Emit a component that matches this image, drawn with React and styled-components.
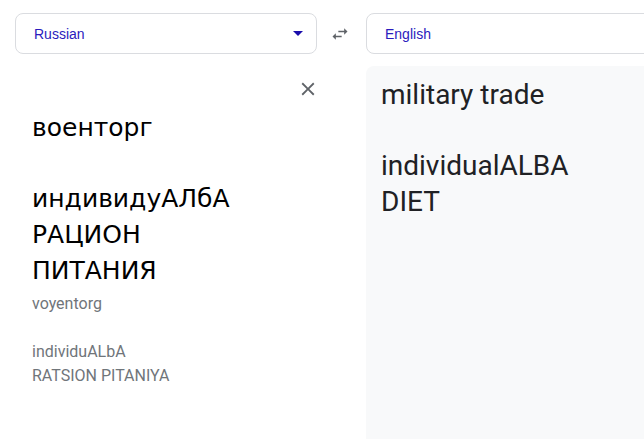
import React from "react";
import styled, { createGlobalStyle } from "styled-components";

const GlobalStyle = createGlobalStyle`
  html, body {
    margin: 0;
    padding: 0;
    background: #fff;
    overflow: hidden;
  }
  body {
    font-family: Roboto, "Liberation Sans", Arial, sans-serif;
  }
`;

const Page = styled.div`
  display: grid;
  grid-template-columns: 302px 49px 302px;
  grid-template-rows: 41px 1fr;
  row-gap: 12px;
  padding: 13px 0 0 15px;
  height: 439px;
  box-sizing: border-box;
  width: 700px;
`;

const Select = styled.div`
  display: flex;
  align-items: center;
  justify-content: space-between;
  border: 1px solid #dadce0;
  border-radius: 8px;
  padding: 0 13px 0 18px;
  box-sizing: border-box;
  font-family: Arial, "Liberation Sans", sans-serif;
  font-size: 14px;
  color: #2b1bbd;
`;

const SwapButton = styled.div`
  display: flex;
  align-items: center;
  justify-content: center;
  color: #5f6368;
  padding-right: 3px;
`;

const SourcePanel = styled.div`
  position: relative;
  padding: 44px 0 0 17px;
`;

const CloseButton = styled.div`
  position: absolute;
  top: 12px;
  right: -2px;
  color: #5f6368;
  display: flex;
`;

const SourceText = styled.div`
  font-family: "Century Gothic", "DejaVu Sans", sans-serif;
  font-size: 25px;
  line-height: 35.7px;
  color: #000;
  white-space: pre-line;
`;

const Translit = styled.div`
  margin-top: 3px;
  font-family: Roboto, "Liberation Sans", sans-serif;
  font-size: 16px;
  line-height: 24px;
  color: #70757a;
  white-space: pre-line;
`;

const TargetPanel = styled.div`
  background: #f8f9fa;
  border-top-left-radius: 8px;
  padding: 11px 0 0 15px;
`;

const TargetText = styled.div`
  font-family: Roboto, "Liberation Sans", sans-serif;
  font-size: 28px;
  line-height: 35.5px;
  color: #202124;
  white-space: pre-line;
`;

const SwapIcon = () => (
  <svg width="20" height="20" viewBox="0 0 24 24" fill="currentColor">
    <path d="M6.99 11L3 15l3.99 4v-3H14v-2H6.99v-3zM21 9l-3.99-4v3H10v2h7.01v3L21 9z" />
  </svg>
);

const CaretIcon = () => (
  <svg width="10" height="5" viewBox="0 0 10 5" fill="#1a0dab">
    <path d="M0 0l5 5 5-5z" />
  </svg>
);

const CloseIcon = () => (
  <svg width="22" height="22" viewBox="0 0 24 24" fill="currentColor">
    <path d="M19 6.41L17.59 5 12 10.59 6.41 5 5 6.41 10.59 12 5 17.59 6.41 19 12 13.41 17.59 19 19 17.59 13.41 12z" />
  </svg>
);

export default function App() {
  return (
    <>
      <GlobalStyle />
      <Page>
        <Select>
          <span>Russian</span>
          <CaretIcon />
        </Select>
        <SwapButton>
          <SwapIcon />
        </SwapButton>
        <Select>
          <span>English</span>
        </Select>
        <SourcePanel>
          <CloseButton>
            <CloseIcon />
          </CloseButton>
          <SourceText>{"военторг\n\nиндивидуАЛбА\nРАЦИОН\nПИТАНИЯ"}</SourceText>
          <Translit>{"voyentorg\n\nindividuALbA\nRATSION PITANIYA"}</Translit>
        </SourcePanel>
        <div />
        <TargetPanel>
          <TargetText>{"military trade\n\nindividualALBA\nDIET"}</TargetText>
        </TargetPanel>
      </Page>
    </>
  );
}
